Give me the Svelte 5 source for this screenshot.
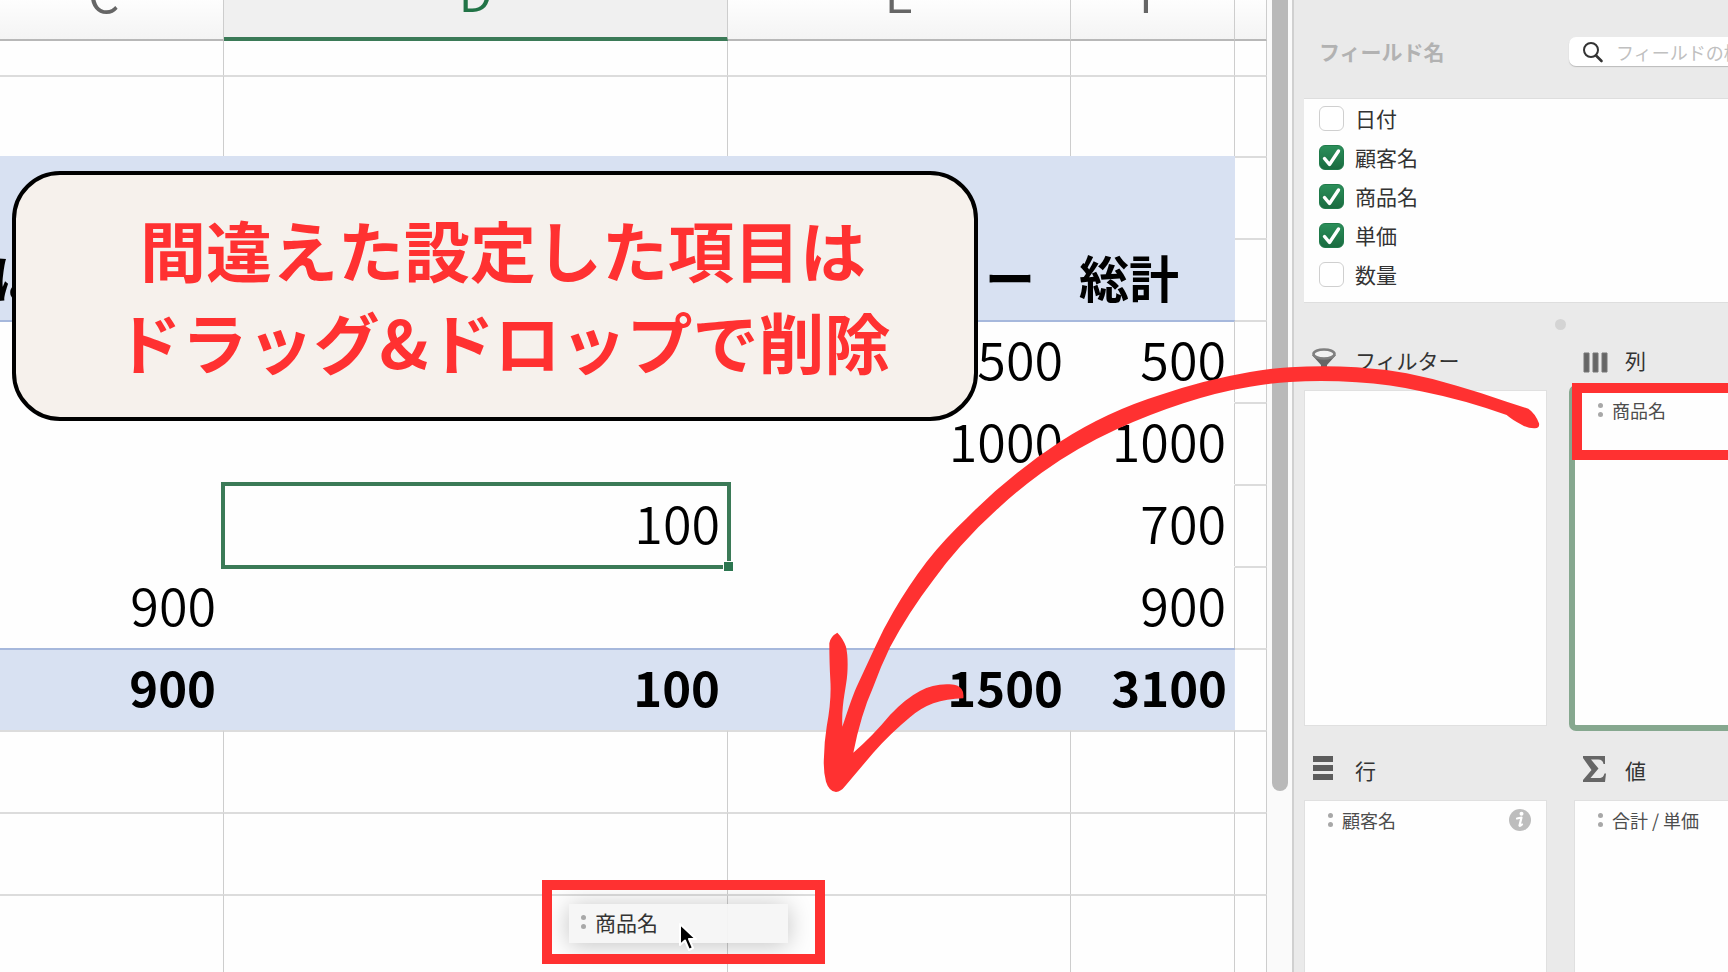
<script lang="ts">
  interface Row {
    kind: 'strip' | 'plain' | 'head' | 'data' | 'total';
    cells: string[];
    ruled?: boolean;
  }

  const columns = ['C', 'D', 'E', 'F', ''];

  const rows: Row[] = [
    { kind: 'strip', cells: ['', '', '', '', ''] },
    { kind: 'plain', cells: ['', '', '', '', ''] },
    { kind: 'head', cells: ['', '', '', '', ''] },
    { kind: 'head', cells: ['ほ', '', 'ー', '総計', ''] },
    { kind: 'data', cells: ['', '', '500', '500', ''], ruled: true },
    { kind: 'data', cells: ['', '', '1000', '1000', ''] },
    { kind: 'data', cells: ['', '100', '', '700', ''] },
    { kind: 'data', cells: ['900', '', '', '900', ''] },
    { kind: 'total', cells: ['900', '100', '1500', '3100', ''], ruled: true },
    { kind: 'plain', cells: ['', '', '', '', ''] },
    { kind: 'plain', cells: ['', '', '', '', ''] },
    { kind: 'plain', cells: ['', '', '', '', ''] }
  ];

  const selected = { row: 6, col: 1 };

  let fields = $state([
    { name: '日付', checked: false },
    { name: '顧客名', checked: true },
    { name: '商品名', checked: true },
    { name: '単価', checked: true },
    { name: '数量', checked: false }
  ]);

  const areas = [
    { id: 'filter', title: 'フィルター', items: [], info: false },
    { id: 'columns', title: '列', items: ['商品名'], info: false },
    { id: 'rows', title: '行', items: ['顧客名'], info: true },
    { id: 'values', title: '値', items: ['合計 / 単価'], info: false }
  ];
</script>

<div class="app">
  <main class="sheet">
    <table>
      <colgroup>
        <col class="col-c" />
        <col />
        <col class="col-e" />
        <col class="col-f" />
        <col class="col-g" />
      </colgroup>
      <thead>
        <tr>
          {#each columns as column, c}
            <th scope="col" class:active={c === selected.col}>{column}</th>
          {/each}
        </tr>
      </thead>
      <tbody>
        {#each rows as row, r}
          <tr class={row.kind} class:ruled={row.ruled}>
            {#each row.cells as cell, c}
              <td class:selected={r === selected.row && c === selected.col} class:end={c === 2}>
                {cell}
              </td>
            {/each}
          </tr>
        {/each}
      </tbody>
    </table>
  </main>

  <div class="scroll"><div class="thumb"></div></div>

  <aside class="panel">
    <div class="topbar">
      <h2>フィールド名</h2>
      <label class="search">
        <svg viewBox="0 0 22 22" width="22" height="22" aria-hidden="true">
          <circle cx="9" cy="9" r="7" fill="none" stroke="#333" stroke-width="2" />
          <path d="M14 14.500L19.500 20" stroke="#333" stroke-width="2.600" stroke-linecap="round" />
        </svg>
        <input type="text" placeholder="フィールドの検索" aria-label="フィールドの検索" />
      </label>
    </div>

    <div class="fields">
      {#each fields as field}
        <label class="field">
          <span class="check">
            <input type="checkbox" bind:checked={field.checked} />
            {#if field.checked}
              <svg viewBox="0 0 25 25" aria-hidden="true">
                <path d="M5.500 13.500L10.500 19.500L19.500 6" fill="none" stroke="#fff" stroke-width="3.400" stroke-linecap="round" stroke-linejoin="round" />
              </svg>
            {/if}
          </span>
          {field.name}
        </label>
      {/each}
    </div>

    <div class="splitter"><span></span></div>

    <div class="areas">
      {#each areas as area}
        <section>
          <h3>
            <svg viewBox="0 0 28 28" width="28" height="28" aria-hidden="true">
              {#if area.id === 'filter'}
                <path d="M0 9L9 19V27L15 23V19L24 9Z" fill="#666" />
                <ellipse cx="12" cy="8" rx="10.500" ry="4.500" fill="#f2f2f2" stroke="#808080" stroke-width="2.600" />
              {:else if area.id === 'columns'}
                <path d="M2 7h5v19H2zM11 7h5v19h-5zM20 7h5v19h-5z" fill="#666" stroke="#777" />
              {:else if area.id === 'rows'}
                <path d="M1 0h20v6H1zM1 9h20v6H1zM1 18h20v6H1z" fill="#5c5c5c" />
              {:else}
                <path d="M1 0H23V8H21.500C21 5 19.500 3.500 16 3.500H9L16.500 12.500L8.500 22H17C20.500 22 21.500 20.500 22.500 17.500H24L23 26H1V24L9.500 14L1 2Z" fill="#666" />
              {/if}
            </svg>
            {area.title}
          </h3>
          <div class="drop" class:target={area.id === 'columns'}>
            {#each area.items as item}
              <div class="item">
                <span class="grip"></span>
                {item}
                {#if area.info}
                  <button type="button" aria-label="情報">
                    <svg viewBox="0 0 22 22" width="22" height="22" aria-hidden="true">
                      <circle cx="11" cy="11" r="11" fill="#bdbdbd" />
                      <circle cx="12.500" cy="4.800" r="2" fill="#fff" />
                      <path d="M8 9.500L12.500 8.500L10.500 16.500Q10.500 17.500 13 15.500" fill="none" stroke="#fff" stroke-width="2.200" stroke-linecap="round" stroke-linejoin="round" />
                    </svg>
                  </button>
                {/if}
              </div>
            {/each}
          </div>
        </section>
      {/each}
    </div>
  </aside>

  <div class="callout">
    <p>間違えた設定した項目は<br />ドラッグ&amp;ドロップで削除</p>
  </div>

  <div class="dragged"><span class="grip"></span>商品名</div>
  <div class="frame frame-source"></div>
  <div class="frame frame-drop"></div>

  <svg class="pointer" viewBox="0 0 20 30" aria-hidden="true">
    <path d="M2 2V23L7 18.500L11 28L15 26L11 17H18Z" fill="#000" stroke="#fff" stroke-width="2" stroke-linejoin="round" />
  </svg>

  <svg class="arrow" viewBox="60 9 2172 1302" aria-hidden="true">
    <path
      fill="#ff3131"
      d="M127 1100C144 1050 155 1014 170 980L225 862Q250 806 280 755Q326 676 380 605Q436 535 500 475Q570 403 650 340Q712 289 780 245Q922 154 1080 105Q1211 60 1350 36Q1410 25 1470 22Q1570 15 1670 22Q1746 27 1820 40Q1896 55 1970 77Q2047 99 2120 125L2185 146Q2206 160 2217 190Q2220 204 2205 205Q2186 206 2165 194Q2137 180 2120 165Q1996 120 1870 95Q1770 73 1670 67Q1570 60 1470 66Q1410 69 1350 80Q1246 97 1150 130Q1046 164 950 208Q832 262 725 338Q659 386 600 440Q536 497 480 560Q436 609 400 660Q325 758 270 862Q242 920 220 980Q182 1065 160 1178Q218 1128 270 1065Q316 1016 360 993Q397 973 440 973C465 973 475 975 485 988Q492 997 490 1015Q440 1017 400 1030Q362 1044 330 1072Q272 1120 220 1178L135 1279Q123 1295 108 1296Q87 1294 78 1265Q69 1230 72 1190Q73 1144 80 1100Q95 1020 91 960Q88 910 88 850Q91 829 112 818Q129 835 138 860Q145 890 142 940C139 985 124 1030 127 1100Z"
    />
  </svg>
</div>

<style>
  :global(body) {
    margin: 0;
    font-family: "Noto Sans CJK JP", "Noto Sans", sans-serif;
  }

  .app {
    position: relative;
    display: flex;
    height: 100vh;
    overflow: hidden;
    background: #fefefe;
  }

  /* Spreadsheet, scrolled a little to the right and down */
  .sheet {
    flex: 1;
    min-width: 0;
    overflow: hidden;
  }

  table {
    width: calc(100% + 16px);
    margin: -51px 0 0 -16px;
    table-layout: fixed;
    border-spacing: 0;
    color: #000;
    font-size: 52px;
    line-height: 60px;
  }

  .col-c { width: 240px; }
  .col-e { width: 343px; }
  .col-f { width: 164px; }
  .col-g { width: 32px; }

  th,
  td {
    box-sizing: border-box;
    padding: 0 8px 9px;
    border-right: 1px solid #cdcdcd;
    white-space: nowrap;
  }

  th {
    height: 92px;
    padding-bottom: 7px;
    border-bottom: 2px solid #b8b8b8;
    background: linear-gradient(#fff 50%, #f4f4f4);
    color: #666;
    font-size: 50px;
    font-weight: 350;
  }

  th.active {
    border-bottom: 4px solid #3b7a57;
    background: #f0f0f0;
    color: #217346;
  }

  td {
    height: 82px;
    border-top: 2px solid #dcdcdc;
    font-weight: 350;
    text-align: right;
  }

  .strip td {
    height: 34px;
    padding-bottom: 0;
    border-top: none;
  }

  .strip + .plain td {
    height: 81px;
  }

  .head td:not(:last-child),
  .data td:not(:last-child),
  .total td:not(:last-child) {
    border-top-color: transparent;
  }

  .head td:not(:last-child),
  .total td:not(:last-child),
  .data td:nth-child(-n + 3) {
    border-right: none;
  }

  .head td:not(:last-child),
  .total td:not(:last-child) {
    background: #d8e1f2;
    font-weight: 700;
  }

  .head td {
    font-size: 50px;
    text-align: left;
  }

  .total td {
    font-size: 49px;
  }

  .head td.end {
    padding-right: 36px;
    text-align: right;
  }

  .ruled td:not(:last-child) {
    border-top: 2px solid #a6b8dc !important;
  }

  .selected {
    position: relative;
  }

  .selected::before {
    content: "";
    position: absolute;
    inset: -4px -3px -3px -3px;
    border: 4px solid #3b7a57;
  }

  .selected::after {
    content: "";
    position: absolute;
    right: -6px;
    bottom: -6px;
    width: 9px;
    height: 9px;
    border: 1px solid #fff;
    background: #2c7650;
  }

  .scroll {
    display: flex;
    justify-content: center;
    width: 25px;
    background: #fafafa;
  }

  .thumb {
    width: 16px;
    height: 791px;
    border-radius: 0 0 8px 8px;
    background: #b9b9b9;
  }

  /* Pivot table field panel */
  .panel {
    box-sizing: border-box;
    width: 436px;
    padding-left: 10px;
    overflow: hidden;
    border-left: 2px solid #d0d0d0;
    background: #eaeaea;
    color: #333;
  }

  h2,
  h3,
  p {
    margin: 0;
  }

  .topbar {
    display: flex;
    align-items: center;
    padding: 37px 0 32px 15px;
  }

  h2 {
    flex: none;
    width: 250px;
    color: #b2b2b2;
    font-size: 21px;
    font-weight: 700;
    line-height: 29px;
  }

  .search {
    display: flex;
    flex: none;
    align-items: center;
    gap: 12px;
    box-sizing: border-box;
    width: 240px;
    height: 29px;
    padding-left: 13px;
    border-radius: 7px;
    background: #fff;
    box-shadow: 0 1px 1px #bbb;
  }

  .search input {
    width: 190px;
    padding: 0;
    border: none;
    outline: none;
    background: none;
    color: #333;
    font-family: inherit;
    font-size: 18px;
  }

  .search input::placeholder {
    color: #c0c0c0;
  }

  .fields {
    box-sizing: border-box;
    height: 205px;
    border-top: 1px solid #dedede;
    border-bottom: 1px solid #dedede;
    background: #fefefe;
  }

  .field {
    display: flex;
    align-items: center;
    gap: 11px;
    height: 39px;
    padding-left: 15px;
    font-size: 21px;
    line-height: 39px;
  }

  .check {
    position: relative;
    width: 25px;
    height: 25px;
  }

  .check input {
    display: block;
    box-sizing: border-box;
    width: 25px;
    height: 25px;
    margin: 0;
    border: 1px solid #cfcfcf;
    border-radius: 6px;
    appearance: none;
    background: #fff;
  }

  .check input:checked {
    border-color: #1f7a4a;
    background: linear-gradient(#2b8f5a, #1a6b40);
  }

  .check svg {
    position: absolute;
    inset: 0;
    pointer-events: none;
  }

  .splitter {
    display: flex;
    align-items: center;
    height: 43px;
    padding-left: 251px;
  }

  .splitter span {
    width: 11px;
    height: 11px;
    border-radius: 50%;
    background: #d4d4d4;
  }

  .areas {
    display: grid;
    grid-template-columns: 243px 243px;
    gap: 30px 27px;
  }

  h3 {
    display: flex;
    align-items: center;
    gap: 15px;
    height: 28px;
    margin-bottom: 16px;
    padding-left: 8px;
    font-size: 21px;
    font-weight: 400;
    line-height: 28px;
    white-space: nowrap;
  }

  .drop {
    box-sizing: border-box;
    height: 336px;
    padding: 7px 15px 0 23px;
    border: 1px solid #e0e0e0;
    background: #fefefe;
  }

  .drop.target {
    border-color: #fefefe;
    border-radius: 2px;
    outline: 6px solid #86a88f;
    outline-offset: -1px;
  }

  .item {
    display: flex;
    align-items: center;
    gap: 9px;
    color: #4d4d4d;
    font-size: 18px;
    line-height: 24px;
  }

  .item button {
    width: 22px;
    height: 22px;
    margin-left: auto;
    padding: 0;
    border: none;
    background: none;
  }

  .item button svg {
    display: block;
  }

  .grip {
    display: flex;
    flex-direction: column;
    gap: 4px;
  }

  .grip::before,
  .grip::after {
    content: "";
    width: 5px;
    height: 5px;
    border-radius: 50%;
    background: #a8a8a8;
  }

  /* Annotations laid over the window */
  .callout {
    position: absolute;
    top: 171px;
    left: 12px;
    display: flex;
    align-items: center;
    justify-content: center;
    box-sizing: border-box;
    width: 966px;
    height: 250px;
    padding: 0 0 4px 16px;
    border: 4px solid #000;
    border-radius: 48px;
    background: #f6f1ec;
    color: #ff3131;
    font-size: 66px;
    font-weight: 700;
    line-height: 92px;
    text-align: center;
    white-space: nowrap;
  }

  .dragged {
    position: absolute;
    top: 904px;
    left: 569px;
    display: flex;
    align-items: center;
    gap: 9px;
    box-sizing: border-box;
    width: 219px;
    height: 39px;
    padding: 0 0 4px 12px;
    background: rgba(245, 245, 245, 0.94);
    box-shadow: 0 2px 24px rgba(0, 0, 0, 0.24);
    color: #333;
    font-size: 21px;
  }

  .frame {
    position: absolute;
    box-sizing: border-box;
    border: 10px solid #ff3131;
  }

  .frame-source {
    top: 383px;
    right: -100px;
    width: 256px;
    height: 77px;
  }

  .frame-drop {
    top: 880px;
    left: 542px;
    width: 283px;
    height: 84px;
  }

  .pointer {
    position: absolute;
    top: 922px;
    left: 678px;
    width: 20px;
    height: 30px;
  }

  .arrow {
    position: absolute;
    top: 363px;
    left: 820px;
    width: 724px;
    height: 434px;
  }
</style>
